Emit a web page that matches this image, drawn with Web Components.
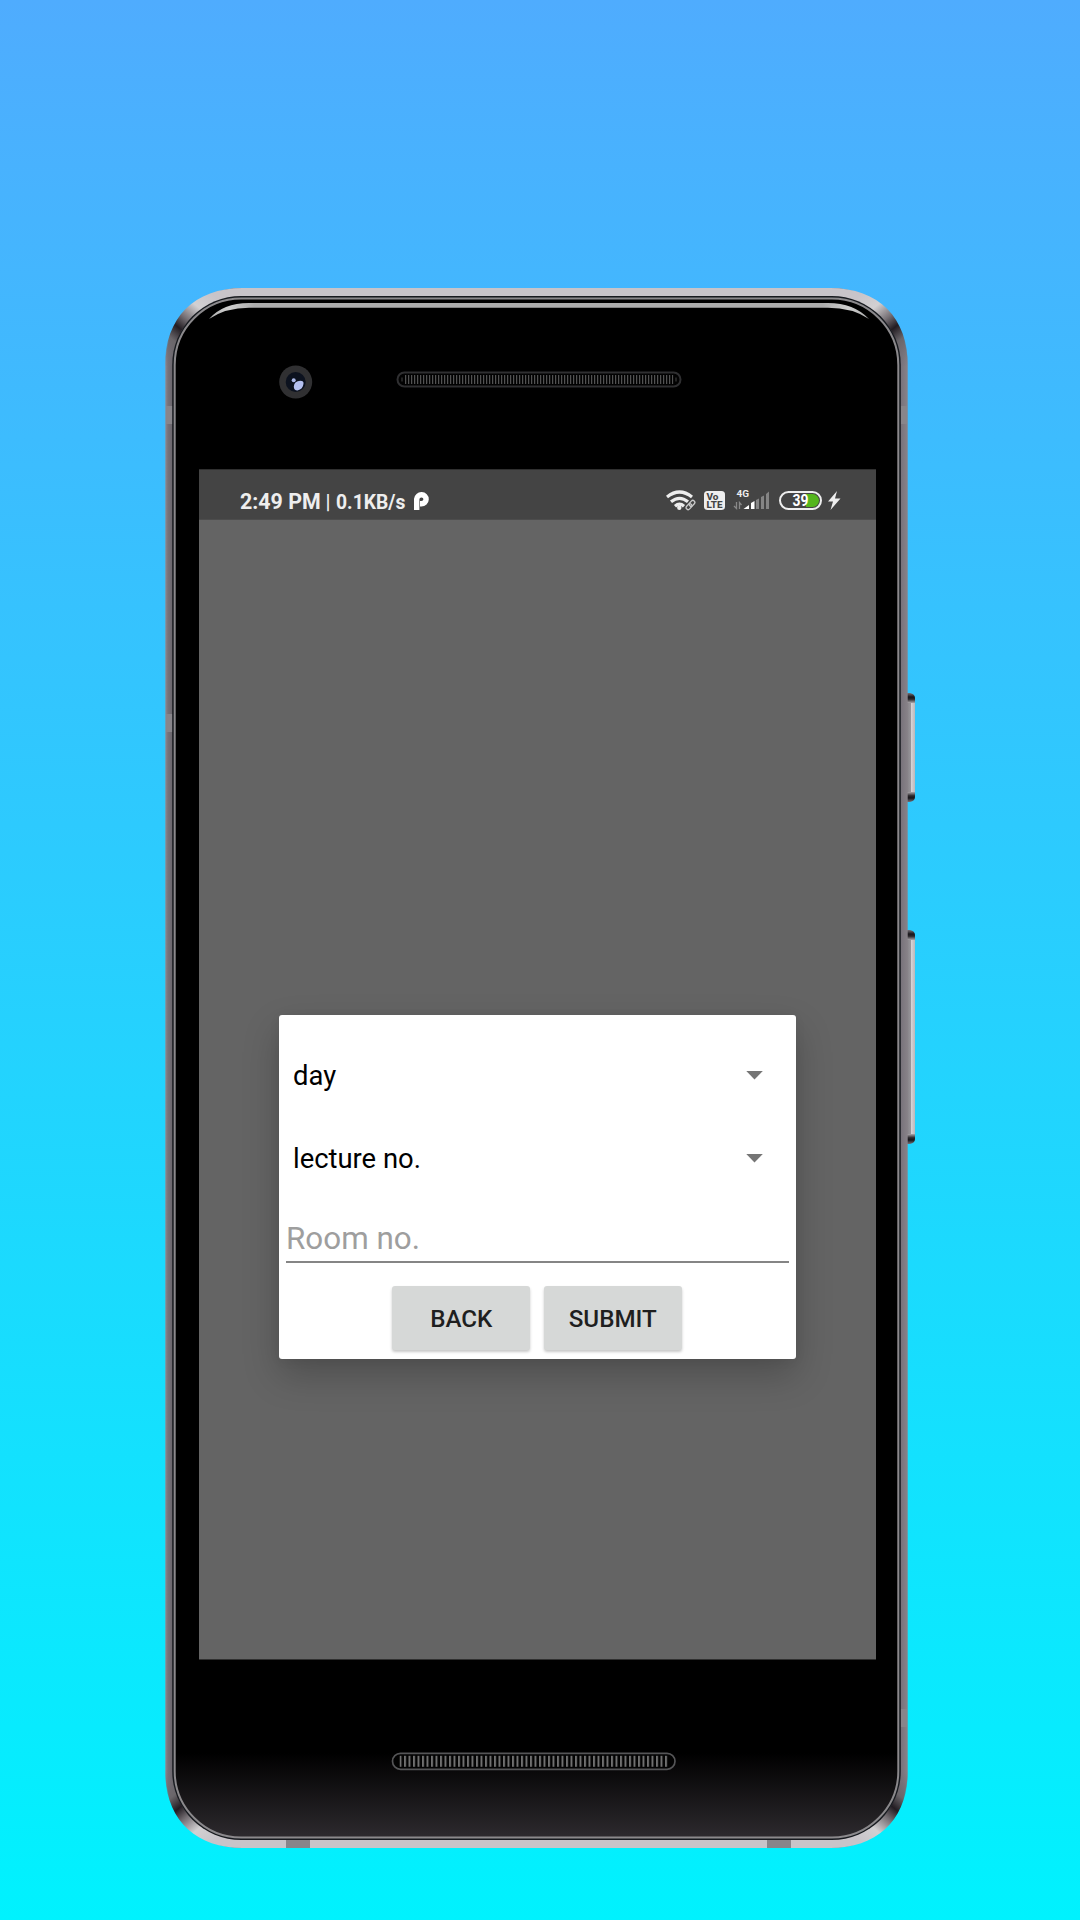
<!DOCTYPE html>
<html lang="en">
<head>
<meta charset="utf-8">
<title>Lecture room form</title>
<style>
html,body{margin:0;padding:0}
body{width:1080px;height:1920px;overflow:hidden;font-family:Roboto,"Liberation Sans",sans-serif}
</style>
</head>
<body>
<promo-stage>
  <phone-frame>
    <status-bar></status-bar>
    <room-dialog>
      <drop-down>day</drop-down>
      <drop-down>lecture no.</drop-down>
      <text-field>Room no.</text-field>
      <raised-button slot="actions">BACK</raised-button>
      <raised-button slot="actions">SUBMIT</raised-button>
    </room-dialog>
  </phone-frame>
</promo-stage>
<script>
const define = (name, html) => customElements.define(name, class extends HTMLElement {
  constructor() {
    super();
    this.attachShadow({ mode: 'open' }).innerHTML = html;
  }
});

define('promo-stage', `<style>
:host{display:flex;box-sizing:border-box;width:1080px;height:1920px;padding:288px 0 0 165px;background:linear-gradient(#4facfe,#00f2fe)}
</style><slot></slot>`);

/* Speaker grilles: a pill outline filled with vertical slits */
const grilleTop = (x, y) => `
<rect x="${x + 1}" y="${y + 1}" width="283" height="14" rx="7" fill="#020202" stroke="#2f2f31" stroke-width="2"/>
<rect x="${x + 8}" y="${y + 3.5}" width="269" height="9" fill="url(#slits)"/>
<path d="M${x + 5.5} ${y + 6}v4M${x + 279.5} ${y + 6}v4" stroke="#444"/>`;
const grilleLow = (x, y) => `
<rect x="${x + 1}" y="${y + 1}" width="282.5" height="16" rx="8" fill="#020202" stroke="#555557" stroke-width="1.7"/>
<rect x="${x + 8}" y="${y + 3.5}" width="269" height="11" fill="url(#slits2)"/>`;

define('phone-frame', `<style>
:host{display:grid;width:750px;height:1560px}
svg,.face{grid-area:1/1}
svg{display:block}
.face{z-index:1;display:flex;padding:181px 0 0 34px}
.screen{display:flex;flex-direction:column;box-sizing:border-box;width:677px;height:1191px;background:#646464;border-bottom:1px solid #303030}
</style>
<svg width="750" height="1560" viewBox="165 288 750 1560">
<defs>
<linearGradient id="side" gradientUnits="userSpaceOnUse" x1="165" x2="908" y1="0" y2="0">
<stop offset="0" stop-color="#918c92"/><stop offset=".004" stop-color="#77727a"/><stop offset=".01" stop-color="#6a666c"/><stop offset=".99" stop-color="#77727a"/><stop offset="1" stop-color="#898389"/></linearGradient>
<linearGradient id="capL" gradientUnits="userSpaceOnUse" x1="165" y1="366" x2="229" y2="288">
<stop offset="0" stop-color="#77727a" stop-opacity="0"/><stop offset=".25" stop-color="#6a666a"/><stop offset=".38" stop-color="#221c22"/><stop offset=".5" stop-color="#777176"/><stop offset=".66" stop-color="#d2d0d2"/><stop offset=".85" stop-color="#c8c4c9"/><stop offset="1" stop-color="#c8c4c9"/></linearGradient>
<linearGradient id="blackFace" x1="0" x2="0" y1="0" y2="1"><stop offset="0" stop-color="#000"/><stop offset=".945" stop-color="#000"/><stop offset="1" stop-color="#2d2a2e"/></linearGradient>
<linearGradient id="shine" gradientUnits="userSpaceOnUse" x1="208" x2="869" y1="0" y2="0"><stop offset="0" stop-color="#aaa"/><stop offset=".03" stop-color="#d0d0d0"/><stop offset=".07" stop-color="#adadad"/><stop offset=".93" stop-color="#adadad"/><stop offset=".97" stop-color="#d0d0d0"/><stop offset="1" stop-color="#aaa"/></linearGradient>
<linearGradient id="key" x1="0" x2="1" y1="0" y2="0"><stop offset="0" stop-color="#858287"/><stop offset=".45" stop-color="#979499"/><stop offset=".55" stop-color="#d5d1d4"/><stop offset="1" stop-color="#bcb8bb"/></linearGradient>
<linearGradient id="keyEnd" x1="0" x2="0" y1="0" y2="1"><stop offset="0" stop-color="#77737a"/><stop offset=".4" stop-color="#171519"/><stop offset=".62" stop-color="#2a272b"/><stop offset="1" stop-color="#aaa6aa"/></linearGradient>
<pattern id="slits" width="3" height="9" patternUnits="userSpaceOnUse" x="405"><rect width="1" height="9" fill="#525252"/><rect x="1" width="1" height="9" fill="#161616"/></pattern>
<pattern id="slits2" width="4.500" height="11" patternUnits="userSpaceOnUse" x="399.500" y="1756"><rect width="2" height="11" fill="#707070"/></pattern>
<path id="corner" d="M165 366C165 318 194 288 243 288V298C205 298 173 322 173 366Z" fill="url(#capL)"/>
<path id="end" d="M907 693h3q5 1 5 5v5h-8z" fill="url(#keyEnd)"/>
</defs>
<rect x="907" y="701" width="8" height="95" fill="url(#key)"/>
<rect x="907" y="938" width="8" height="198" fill="url(#key)"/>
<use href="#end"/><use href="#end" transform="translate(0 1495) scale(1 -1)"/>
<use href="#end" transform="translate(0 237)"/><use href="#end" transform="translate(0 1837) scale(1 -1)"/>
<rect x="165.300" y="288" width="742.400" height="1560" rx="76" fill="url(#side)"/>
<path d="M241 288H832V298H241zM241 1838H832V1848H241z" fill="#c8c4c9"/>
<use href="#corner"/>
<use href="#corner" transform="translate(1073 0) scale(-1 1)"/>
<use href="#corner" transform="translate(0 2136) scale(1 -1)"/>
<use href="#corner" transform="translate(1073 2136) scale(-1 -1)"/>
<path d="M166 406h7v18h-7zM900.500 406h6.500v18h-6.500zM166 714h7v18h-7zM900.500 1709h6.500v18h-6.500zM286 1839h24v9h-24zM767 1839h24v9h-24z" fill="#88858a"/>
<rect x="172.200" y="296" width="728.600" height="1544" rx="69" fill="#171a1f"/>
<rect x="174.700" y="298.500" width="723.600" height="1539" rx="66.500" fill="url(#blackFace)" stroke="#8b898c" stroke-width="2"/>
<path d="M209 319Q223 303 249 303H828Q854 303 869 319Q852 307.800 828 307.800H249Q226 307.800 209 319Z" fill="url(#shine)"/>
<circle cx="295.700" cy="382" r="16.500" fill="#303032"/><circle cx="295.700" cy="382" r="10" fill="#0c121f"/>
<circle cx="293.700" cy="380.300" r="2" fill="#aab7e6"/><path d="M293.800 386.500q.5-5.500 6.500-5.700q3.700 0 3.200 3q-.5 5.500-6 6.700q-3.700 0-3.700-4z" fill="#b4c0f0"/>
${grilleTop(396.5, 371.5)}
${grilleLow(391.5, 1752.3)}
</svg>
<div class="face"><div class="screen"><slot></slot></div></div>`);

define('status-bar', `<style>
:host{display:flex;box-sizing:border-box;height:51px;padding:11px 35px 0 41px;background:#444;border-top:1px solid #303030;border-bottom:1px solid #4c4c4c;color:#eee;font-weight:700;justify-content:space-between;align-items:flex-start}
.left{display:flex;align-items:baseline;white-space:pre;line-height:41px;height:41px}
.time{font-size:21.400px;width:80.500px}.sep{width:15px;text-align:center;font-size:20px;font-weight:500}.rate{font-size:19.300px;margin-left:.5px;width:71px}
svg{display:block}
.p{margin-left:7px;align-self:flex-start;margin-top:9.500px}
</style>
<div class="left"><span class="time">2:49 PM</span><span class="sep">|</span><span class="rate">0.1KB/s</span>
<svg class="p" width="15" height="20" viewBox="0 0 15 20"><path d="M2.700 19V8a4.700 4.500 0 1 1 4.700 4.800H6" fill="none" stroke="#fff" stroke-width="5.400"/></svg></div>
<svg width="176" height="24" viewBox="665 489 176 24" style="margin-top:8px" font-family="Roboto,sans-serif">
<g fill="none" stroke="#eee" stroke-width="3.200"><path d="M667 497Q679.500 487 692 497M671 501.800Q679.500 494.800 688 501.800M675 506.200Q679.500 502.200 684 506.200"/></g>
<circle cx="679.300" cy="507.800" r="2.200" fill="#eee"/>
<g transform="rotate(-48 690.500 505)"><rect x="684" y="501.500" width="13" height="7" rx="3.500" fill="#444"/><g fill="none" stroke="#ccc" stroke-width="1.300"><rect x="685" y="503" width="6.500" height="4" rx="2"/><rect x="689.500" y="503" width="6.500" height="4" rx="2"/></g></g>
<rect x="704" y="491" width="21" height="19" rx="3.500" fill="#eee"/>
<g fill="#444" font-weight="800" font-size="9.800"><text x="706.500" y="499.500" textLength="12" lengthAdjust="spacingAndGlyphs">Vo</text><text x="706.500" y="508.300" textLength="16" lengthAdjust="spacingAndGlyphs">LTE</text></g>
<text x="736.500" y="497" font-size="9.800" font-weight="700" fill="#eee" textLength="12.500" lengthAdjust="spacingAndGlyphs">4G</text>
<path d="M736.500 502v6.500l-2.500-2.500M739.500 509v-6.500l2 2.500" stroke="#888" fill="none" stroke-width="1.300"/>
<path d="M743.500 509l5.500-4v4zM751 509v-6l3.500-2v8z" fill="#fff"/><path d="M756 509v-9l3-1.500v10.500zM761 509v-12l3-1.500v13.500zM766 509v-15l3-2.500v17.500z" fill="#858585"/>
<rect x="780" y="492" width="41" height="17" rx="8.500" fill="#444" stroke="#eee" stroke-width="2"/>
<path d="M806 494h6.500a6.500 6.500 0 0 1 0 13H806z" fill="#54b51d"/>
<text x="792.500" y="506" font-size="15.600" font-weight="700" fill="#fff" textLength="16" lengthAdjust="spacingAndGlyphs">39</text>
<path d="M837 491l-9 10.500h5l-2.500 8.500 10-11.500h-5.500z" fill="#eee"/>
</svg>`);

define('room-dialog', `<style>
:host{display:flex;flex-direction:column;box-sizing:border-box;width:517px;height:344px;margin:495px 0 0 80px;background:#fff;border-radius:3px;padding:19px 7px 0;box-shadow:0 16px 36px rgba(0,0,0,.22),0 2px 12px rgba(0,0,0,.05)}
.actions{display:flex;justify-content:center;gap:13.500px;margin:23px 1px 0 0}
</style><slot></slot><div class="actions"><slot name="actions"></slot></div>`);

define('drop-down', `<style>
:host{display:flex;align-items:center;justify-content:space-between;height:83px;padding:0 26px 0 7px;font-size:27.400px;color:#000}
svg{display:block}
</style><span><slot></slot></span><svg width="17" height="9" viewBox="0 0 17 9"><path d="M.3 0h16.500L8.500 8.500z" fill="#757575"/></svg>`);

define('text-field', `<style>
:host{display:flex;align-items:flex-end;box-sizing:border-box;height:63px;padding:0 0 4.500px;border-bottom:2px solid #858585;color:#9e9e9e;font-size:31.400px;line-height:36px}
</style><span><slot></slot></span>`);

define('raised-button', `<style>
:host{display:flex;align-items:center;justify-content:center;box-sizing:border-box;width:138px;height:64px;padding-top:1px;border-radius:3px;background:#d6d8d7;color:#1f1f1f;font-size:24.200px;font-weight:500;box-shadow:0 2px 3px rgba(0,0,0,.22)}
</style><slot></slot>`);
</script>
</body>
</html>
